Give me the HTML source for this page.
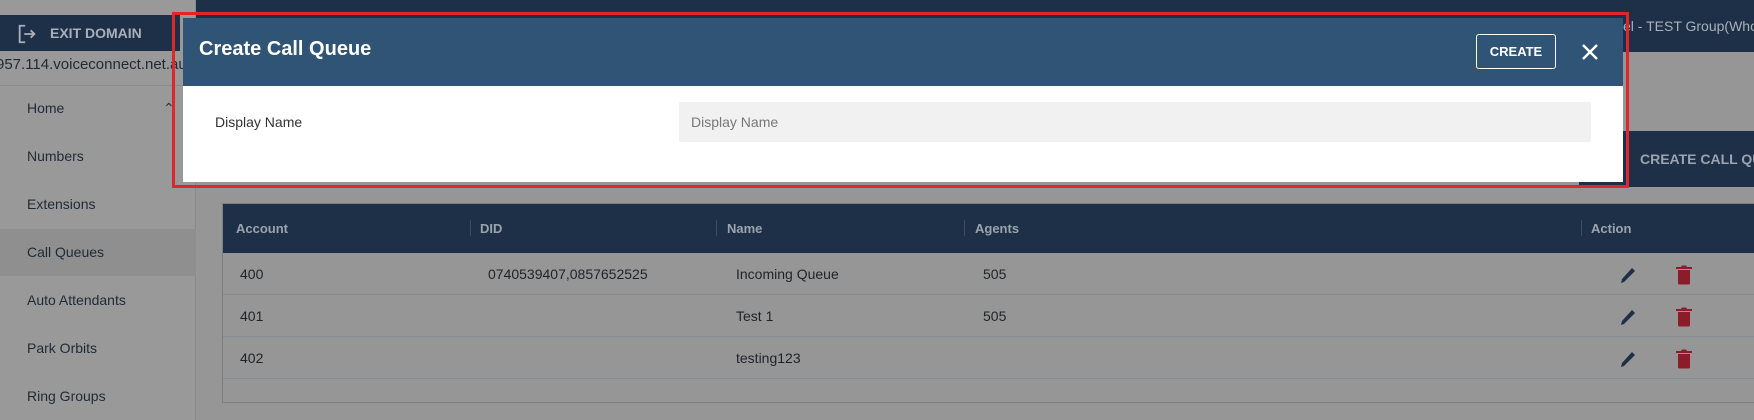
<!DOCTYPE html>
<html><head><meta charset="utf-8"><style>
*{margin:0;padding:0;box-sizing:border-box}
body{width:1754px;height:420px;overflow:hidden;background:#969696;font-family:"Liberation Sans",sans-serif;position:relative}
.abs{position:absolute}
.side{left:0;top:0;width:196px;height:420px;background:#999;border-right:1px solid #8a8a8a}
.top{left:196px;top:0;width:1558px;height:52px;background:#1e3048}
.exit{left:0;top:15px;width:180px;height:36px;background:#1e3048;color:#a9b0ba;font-weight:bold;font-size:14px;line-height:36px;padding-left:50px}
.menu{left:27px;font-size:14px;color:#1f2a36}
.tbl{left:222px;top:203px;width:1532px;height:200px;border:1px solid #7f7f7f;border-right:none}
.th{position:absolute;top:0;left:0;right:0;height:49px;background:#1e3048}
.th span{position:absolute;top:17px;font-size:13px;font-weight:bold;color:#9aa3ae}
.th i{position:absolute;top:16px;width:1px;height:16px;background:#3e4d62}
.row{position:absolute;left:0;right:0;height:42px;border-bottom:1px solid #858a92;font-size:14px;color:#1f2328}
.row span{position:absolute;top:13px}
</style></head><body>
<div class="abs side"></div>
<div class="abs top"></div>
<div class="abs" style="left:1623px;top:18px;font-size:14px;color:#a9b0ba;white-space:nowrap">el - TEST Group(Whol</div>
<div class="abs exit">EXIT DOMAIN</div>
<svg class="abs" style="left:16px;top:23px" width="22" height="22" viewBox="0 0 24 24" fill="none" stroke="#a9b0ba" stroke-width="2"><path d="M10 3H4v18h6M9 12h11M16 8l4 4-4 4"/></svg>
<div class="abs" style="left:-4px;top:56px;font-size:15px;color:#1f2a36;white-space:nowrap">957.114.voiceconnect.net.au</div>
<div class="abs" style="left:0;top:85px;width:196px;height:1px;background:#8a8a8a"></div>
<div class="abs" style="left:0;top:229px;width:196px;height:47px;background:#8f8f8f"></div>
<div class="abs menu" style="top:100px">Home</div>
<div class="abs" style="left:163px;top:100px;font-size:14px;color:#333">&#8963;</div>
<div class="abs menu" style="top:148px">Numbers</div>
<div class="abs menu" style="top:196px">Extensions</div>
<div class="abs menu" style="top:244px">Call Queues</div>
<div class="abs menu" style="top:292px">Auto Attendants</div>
<div class="abs menu" style="top:340px">Park Orbits</div>
<div class="abs menu" style="top:388px">Ring Groups</div>
<div class="abs" style="left:1579px;top:131px;width:175px;height:56px;background:#1e3048;color:#9aa3ae;font-weight:bold;font-size:14px;line-height:56px;padding-left:61px;white-space:nowrap;overflow:hidden">CREATE CALL QUEUE</div>
<div class="abs tbl">
<div class="th"><span style="left:13px">Account</span><i style="left:247px"></i><span style="left:257px">DID</span><i style="left:493px"></i><span style="left:504px">Name</span><i style="left:741px"></i><span style="left:752px">Agents</span><i style="left:1358px"></i><span style="left:1368px">Action</span></div>
<div class="row" style="top:49px"><span style="left:17px">400</span><span style="left:265px">0740539407,0857652525</span><span style="left:513px">Incoming Queue</span><span style="left:760px">505</span></div>
<div class="row" style="top:91px"><span style="left:17px">401</span><span style="left:513px">Test 1</span><span style="left:760px">505</span></div>
<div class="row" style="top:133px"><span style="left:17px">402</span><span style="left:513px">testing123</span></div>
</div>
<svg class="abs" style="left:1618px;top:265px" width="20" height="20" viewBox="0 0 20 20"><path d="M3 18l1-4L14 3l3 3L6 17z" fill="#1e3048"/></svg>
<svg class="abs" style="left:1676px;top:265px" width="16" height="20" viewBox="0 0 16 20"><path fill="#8b1c2a" d="M2 5h12v13a1.5 1.5 0 0 1-1.5 1.5h-9A1.5 1.5 0 0 1 2 18zM0 2h5l1-1.5h4L11 2h5v2H0z"/></svg>
<svg class="abs" style="left:1618px;top:307px" width="20" height="20" viewBox="0 0 20 20"><path d="M3 18l1-4L14 3l3 3L6 17z" fill="#1e3048"/></svg>
<svg class="abs" style="left:1676px;top:307px" width="16" height="20" viewBox="0 0 16 20"><path fill="#8b1c2a" d="M2 5h12v13a1.5 1.5 0 0 1-1.5 1.5h-9A1.5 1.5 0 0 1 2 18zM0 2h5l1-1.5h4L11 2h5v2H0z"/></svg>
<svg class="abs" style="left:1618px;top:349px" width="20" height="20" viewBox="0 0 20 20"><path d="M3 18l1-4L14 3l3 3L6 17z" fill="#1e3048"/></svg>
<svg class="abs" style="left:1676px;top:349px" width="16" height="20" viewBox="0 0 16 20"><path fill="#8b1c2a" d="M2 5h12v13a1.5 1.5 0 0 1-1.5 1.5h-9A1.5 1.5 0 0 1 2 18zM0 2h5l1-1.5h4L11 2h5v2H0z"/></svg>
<!-- modal -->
<div class="abs" style="left:172px;top:12px;width:1457px;height:176px;border:3px solid #e0262b"></div>
<div class="abs" style="left:183px;top:18px;width:1440px;height:68px;background:#2f5475"></div>
<div class="abs" style="left:199px;top:38px;font-size:20px;font-weight:bold;color:#fff">Create Call Queue</div>
<div class="abs" style="left:1476px;top:34px;width:80px;height:35px;border:1px solid #fff;border-radius:3px;color:#fff;font-weight:bold;font-size:13px;line-height:33px;text-align:center">CREATE</div>
<svg class="abs" style="left:1581px;top:43px" width="18" height="18" viewBox="0 0 18 18" stroke="#fff" stroke-width="2.4"><path d="M2 2l14 14M16 2L2 16"/></svg>
<div class="abs" style="left:183px;top:86px;width:1440px;height:96px;background:#fff"></div>
<div class="abs" style="left:215px;top:114px;font-size:14px;color:#333">Display Name</div>
<div class="abs" style="left:679px;top:102px;width:912px;height:40px;background:#f1f1f1;border-radius:2px;font-size:14px;color:#777;line-height:40px;padding-left:12px">Display Name</div>
</body></html>
